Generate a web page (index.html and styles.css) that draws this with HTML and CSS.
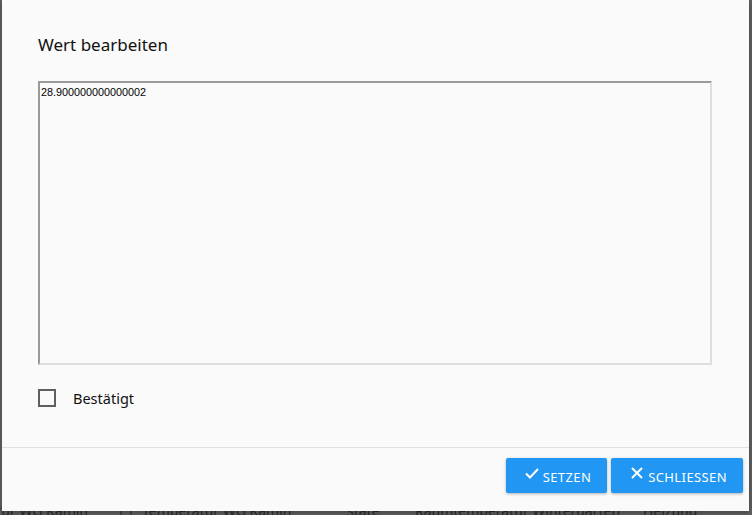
FILE: index.html
```html
<!DOCTYPE html>
<html lang="de">
<head>
<meta charset="utf-8">
<link rel="stylesheet" href="styles.css">
</head>
<body>
<div class="page">
  <div class="row">
    <span class="c1">Außentemperatur WG Kamin</span>
    <span class="c2"><span class="box"></span>Temperatur WG Kamin</span>
    <span class="c3">state</span>
    <span class="c4">Raumtemperatur Wintergarten</span>
    <span class="c5">Heizung</span>
  </div>
</div>
<div class="dialog">
  <h1 class="title">Wert bearbeiten</h1>
  <div class="body">
    <textarea class="value">28.900000000000002</textarea>
    <label class="check"><span class="checkbox"></span><span class="check-label">Bestätigt</span></label>
  </div>
  <div class="actions">
    <button class="btn"><svg class="ico" viewBox="0 0 16 16" width="16" height="16"><path d="M2 8.5 L6 12.5 L14 4" fill="none" stroke="#fff" stroke-width="2"/></svg>SETZEN</button>
    <button class="btn"><svg class="ico" viewBox="0 0 16 16" width="16" height="16"><path d="M3 3 L13 13 M13 3 L3 13" fill="none" stroke="#fff" stroke-width="2"/></svg>SCHLIESSEN</button>
  </div>
</div>
</body>
</html>
```
FILE: styles.css
```css
html, body {
  margin: 0;
  padding: 0;
  width: 752px;
  height: 515px;
  overflow: hidden;
  background: #616161;
  font-family: "Noto Sans", "Open Sans", sans-serif;
}
.page {
  height: 515px;
  display: flex;
  flex-direction: column;
  justify-content: flex-end;
}
.row {
  display: flex;
  height: 15px;
  font-size: 14px;
  line-height: 22px;
  color: #2a2a2a;
  white-space: nowrap;
  overflow: hidden;
  align-items: flex-start;
}
.row span { display: inline-flex; align-items: flex-start; flex-shrink: 0; }
.c1 { width: 88px; justify-content: flex-end; }
.c2 { width: 227px; padding-left: 32px; }
.box { width: 12px; height: 12px; border: 2px solid #444; margin: 5px 10px 0 0; box-sizing: border-box; }
.c3 { width: 68px; }
.c4 { width: 228px; overflow: hidden; }
.dialog {
  position: absolute;
  left: 2px;
  top: 0;
  width: 747px;
  height: 511px;
  background: #fafafa;
  box-shadow: 0 2px 6px rgba(0,0,0,0.3);
  display: flex;
  flex-direction: column;
  box-sizing: border-box;
}
.title {
  margin: 0;
  padding: 32px 36px 0;
  font-size: 17px;
  font-weight: 400;
  line-height: 25px;
  color: #111;
}
.body {
  padding: 24px 37px 0 36px;
  display: flex;
  flex-direction: column;
  flex: 1;
}
.value {
  display: block;
  flex-shrink: 0;
  width: 674px;
  height: 284px;
  box-sizing: border-box;
  margin: 0;
  padding: 2px 1px;
  border-style: solid;
  border-width: 2px;
  border-color: #999 #ddd #ddd #999;
  background: #fafafa;
  font-family: "Liberation Sans", Arial, sans-serif;
  font-size: 10.8px;
  line-height: 14px;
  color: #000;
  resize: none;
  outline: none;
}
.check {
  display: flex;
  align-items: center;
  margin-top: 24px;
  height: 18px;
}
.checkbox {
  width: 18px;
  height: 18px;
  box-sizing: border-box;
  border: 2px solid #5f5f5f;
}
.check-label {
  margin-left: 17px;
  font-size: 14.5px;
  color: #111;
}
.actions {
  border-top: 1px solid #e0e0e0;
  display: flex;
  justify-content: flex-end;
  gap: 4px;
  padding: 10px 6px 18px;
}
.btn {
  display: flex;
  align-items: center;
  height: 35px;
  padding: 2px 16px 0 18px;
  border: 0;
  border-radius: 2px;
  background: #2196f3;
  color: #fff;
  font-family: "Noto Sans", "Open Sans", sans-serif;
  font-size: 13px;
  letter-spacing: 0.4px;
  box-shadow: 0 1px 3px rgba(0,0,0,0.3);
}
.ico { margin: -7px 3px 0 0; }
```
